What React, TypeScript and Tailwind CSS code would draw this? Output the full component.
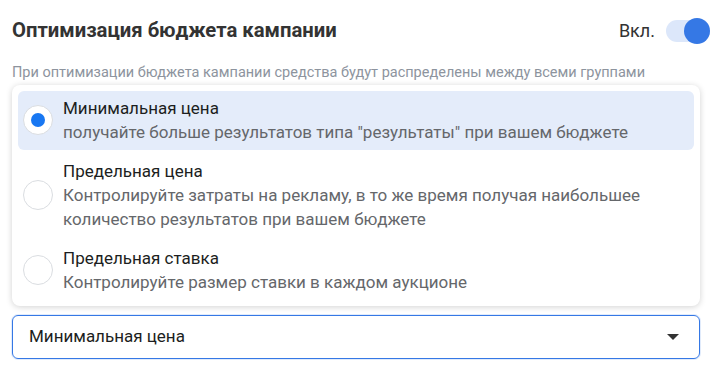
import { useState } from "react";

const options = [
  {
    id: "lowest",
    title: "Минимальная цена",
    desc: 'получайте больше результатов типа "результаты" при вашем бюджете',
  },
  {
    id: "costcap",
    title: "Предельная цена",
    desc: "Контролируйте затраты на рекламу, в то же время получая наибольшее количество результатов при вашем бюджете",
  },
  {
    id: "bidcap",
    title: "Предельная ставка",
    desc: "Контролируйте размер ставки в каждом аукционе",
  },
];

export default function App() {
  const [enabled, setEnabled] = useState(true);
  const [selected, setSelected] = useState("lowest");

  const current = options.find((o) => o.id === selected);

  return (
    <div className="w-[717px] h-[376px] bg-white px-3 font-['Roboto',sans-serif] text-[#1c1e21]">
      {/* Header */}
      <div className="flex items-center justify-between h-[60px] pt-px">
        <h1 className="text-[20.3px] font-bold text-[#333]">
          Оптимизация бюджета кампании
        </h1>
        <div className="flex items-center gap-[11px] -mr-[5px]">
          <span className="text-[18px] text-[#333]">Вкл.</span>
          <button
            onClick={() => setEnabled(!enabled)}
            className="relative h-[22px] w-[44px] rounded-full bg-[#dce7fa]"
          >
            <span
              className={`absolute top-[-2px] h-[26px] w-[26px] rounded-full bg-[#3578e5] ${
                enabled ? "right-0" : "left-0"
              }`}
            />
          </button>
        </div>
      </div>

      <p className="text-[14.5px] leading-[16px] text-[#8d949e] mt-[5px]">
        При оптимизации бюджета кампании средства будут распределены между всеми группами
      </p>

      {/* Options menu */}
      <div className="mt-[4px] w-[688px] rounded-lg bg-white p-[6px] shadow-[0_1px_6px_rgba(0,0,0,0.18)] flex flex-col gap-1">
        {options.map((o) => {
          const active = o.id === selected;
          return (
            <div
              key={o.id}
              onClick={() => setSelected(o.id)}
              className={`flex items-center rounded-md pl-[5px] pr-3 pt-[5px] pb-[6px] cursor-pointer ${
                active ? "bg-[#e4ecfa]" : ""
              }`}
            >
              <span className="flex h-[30px] w-[30px] shrink-0 items-center justify-center rounded-full border border-[#dadde1] bg-white">
                {active && <span className="h-[14px] w-[14px] rounded-full bg-[#1877f2]" />}
              </span>
              <div className="ml-[10px] text-[17px] leading-[24px]">
                <div className="text-[#1c1e21]">{o.title}</div>
                <div className="text-[#65676b] max-w-[600px]">{o.desc}</div>
              </div>
            </div>
          );
        })}
      </div>

      {/* Select */}
      <div className="mt-[9px] flex h-[44px] w-[688px] items-center justify-between rounded-md border border-[#3578e5] pl-4 pr-[20px] shadow-[0_0_0_1px_rgba(53,120,229,0.15)]">
        <span className="text-[17px] text-[#1c1e21]">{current?.title}</span>
        <span className="h-0 w-0 border-x-[6px] border-t-[6px] border-x-transparent border-t-[#333]" />
      </div>
    </div>
  );
}
